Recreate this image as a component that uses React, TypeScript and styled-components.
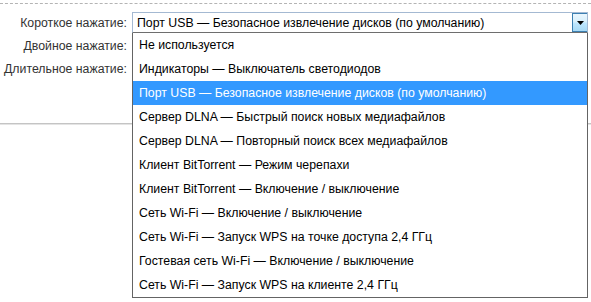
import React from "react";
import styled, { createGlobalStyle } from "styled-components";

// styles
const GlobalStyle = createGlobalStyle`
  html, body {
    margin: 0;
    padding: 0;
    background: #ffffff;
  }
  body {
    font-family: "Liberation Sans", Arial, sans-serif;
    font-size: 12.3px;
    color: #000000;
  }
`;

const Page = styled.div`
  width: 591px;
  height: 302px;
  padding-top: 3px;
  box-sizing: border-box;
  overflow: hidden;
`;

const Section = styled.div`
  border-top: 1px dashed #b4b4b4;
  border-bottom: 1px solid #c4c4c4;
  box-shadow: 0 1px 0 #e4e4e4;
  height: 121px;
  box-sizing: border-box;
  padding-top: 8px;
  display: flex;
  flex-direction: column;
  gap: 2px;
`;

const Row = styled.div`
  display: flex;
  align-items: center;
  height: 21px;
`;

const Label = styled.span`
  width: 127px;
  flex-shrink: 0;
  text-align: right;
  color: #333333;
  white-space: nowrap;
  padding-right: 5px;
`;

const SelectWrap = styled.div`
  position: relative;
  width: 456px;
`;

const SelectBox = styled.div`
  display: flex;
  align-items: center;
  height: 21px;
  box-sizing: border-box;
  border: 1px solid #a4b9d2;
  border-bottom-color: #6e6e6e;
  padding-left: 4px;
  background: #ffffff;
`;

const SelectValue = styled.span`
  flex: 1;
  white-space: nowrap;
`;

const ArrowButton = styled.span`
  width: 15px;
  height: 19px;
  box-sizing: border-box;
  border: 1px solid #3c7fb1;
  border-right: none;
  background: linear-gradient(#eaf6fd, #d9f0fc 45%, #bee6fd 55%, #a7d9f5);
  display: flex;
  align-items: center;
  justify-content: center;
`;

const Menu = styled.ul`
  position: absolute;
  top: 21px;
  left: 0;
  width: 456px;
  box-sizing: border-box;
  margin: 0;
  padding: 0;
  list-style: none;
  background: #ffffff;
  border: 1px solid #646464;
  border-top: none;
  z-index: 2;
`;

const Option = styled.li<{ $active?: boolean }>`
  height: 24px;
  line-height: 24px;
  padding-left: 6px;
  white-space: nowrap;
  background: ${(p) => (p.$active ? "#3399ff" : "transparent")};
  color: ${(p) => (p.$active ? "#ffffff" : "#000000")};
`;

// data
const options = [
  "Не используется",
  "Индикаторы — Выключатель светодиодов",
  "Порт USB — Безопасное извлечение дисков (по умолчанию)",
  "Сервер DLNA — Быстрый поиск новых медиафайлов",
  "Сервер DLNA — Повторный поиск всех медиафайлов",
  "Клиент BitTorrent — Режим черепахи",
  "Клиент BitTorrent — Включение / выключение",
  "Сеть Wi-Fi — Включение / выключение",
  "Сеть Wi-Fi — Запуск WPS на точке доступа 2,4 ГГц",
  "Гостевая сеть Wi-Fi — Включение / выключение",
  "Сеть Wi-Fi — Запуск WPS на клиенте 2,4 ГГц",
];

const selected = 2;

// component
const App: React.FC = () => {
  return (
    <Page>
      <GlobalStyle />
      <Section>
        <Row>
          <Label>Короткое нажатие:</Label>
          <SelectWrap>
            <SelectBox>
              <SelectValue>{options[selected]}</SelectValue>
              <ArrowButton>
                <svg width="7" height="4" viewBox="0 0 7 4">
                  <path d="M0 0h7L3.5 4z" fill="#000" />
                </svg>
              </ArrowButton>
            </SelectBox>
            <Menu>
              {options.map((o, i) => (
                <Option key={o} $active={i === selected}>
                  {o}
                </Option>
              ))}
            </Menu>
          </SelectWrap>
        </Row>
        <Row>
          <Label>Двойное нажатие:</Label>
        </Row>
        <Row>
          <Label>Длительное нажатие:</Label>
        </Row>
      </Section>
    </Page>
  );
};

export default App;
